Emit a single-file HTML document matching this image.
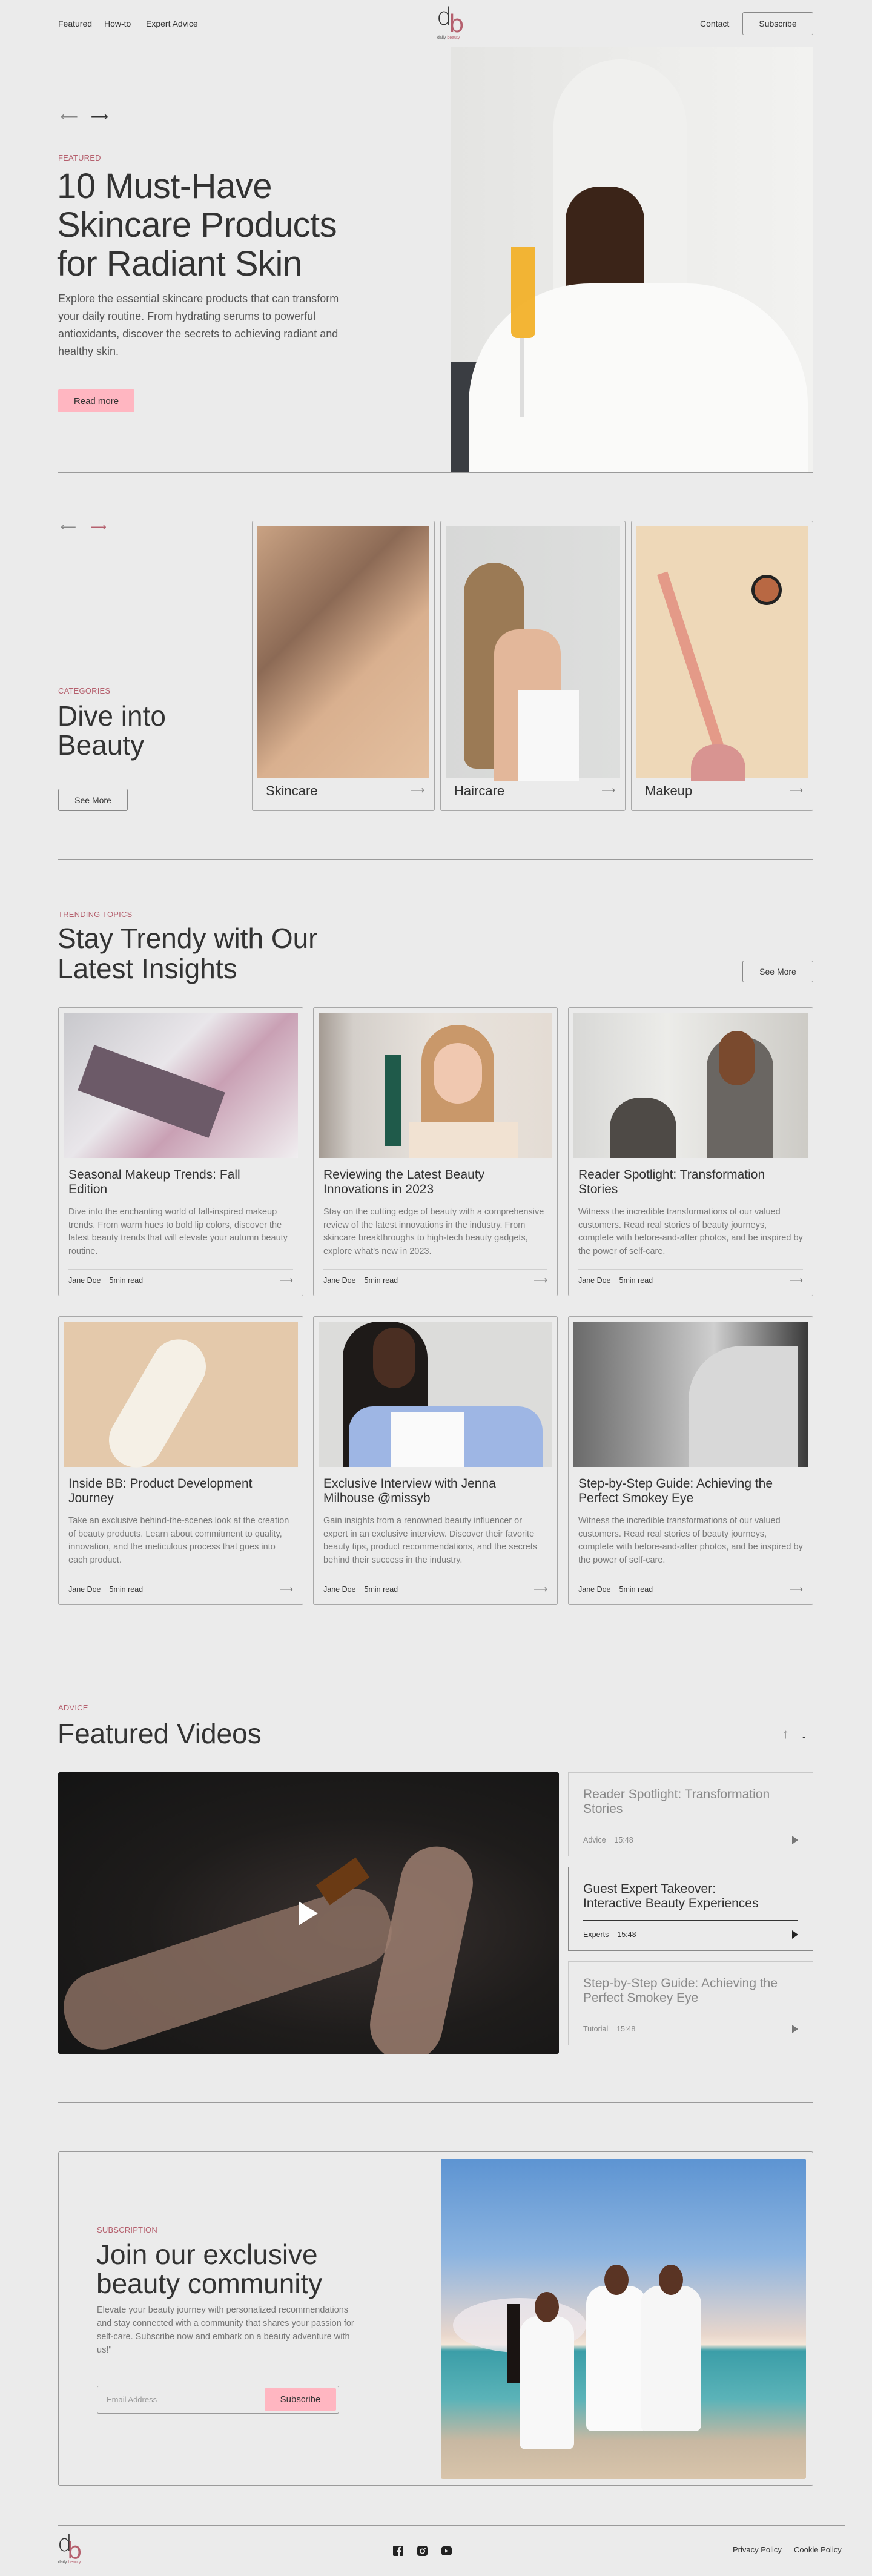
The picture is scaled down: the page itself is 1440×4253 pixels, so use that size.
<!DOCTYPE html>
<html><head><meta charset="utf-8">
<style>
*{margin:0;padding:0;box-sizing:border-box}
body{width:1440px;height:4253px;background:#ebebeb;font-family:"Liberation Sans",sans-serif;color:#333;position:relative;overflow:hidden}
.a{position:absolute}
.lbl{position:absolute;font-size:13px;color:#b5606e;letter-spacing:0.2px}
.line{position:absolute;height:1px;background:#9a9a9a}
.btn{position:absolute;border:1px solid #888;border-radius:3px;font-size:14px;display:flex;align-items:center;justify-content:center;color:#333}
.card{position:absolute;border:1px solid #a8a8a8;border-radius:3px}
.img{position:absolute;left:8px;right:8px;top:8px}
.ct{position:absolute;left:16px;width:335px;font-size:21px;line-height:24px;color:#333}
.cd{position:absolute;left:16px;right:16px;font-size:14.5px;line-height:21.5px;color:#7a7a7a}
.cdiv{position:absolute;left:16px;right:16px;height:1px;background:#cfcfcf}
.meta{position:absolute;left:16px;font-size:12.5px;color:#333}
.meta span{margin-right:14px}
.arr{position:absolute;right:16px;font-size:16px;color:#777}
.vc{position:absolute;left:938px;width:405px;height:139px;border:1px solid #c8c8c8}
.vc .t{position:absolute;left:24px;top:24px;width:340px;font-size:21px;line-height:24px;color:#8a8a8a}
.vc .d{position:absolute;left:24px;right:24px;top:87px;height:1px;background:#d5d5d5}
.vc .m{position:absolute;left:24px;top:104px;font-size:12.5px;color:#888}
.vc .p{position:absolute;right:24px;top:104px;width:0;height:0;border-left:10px solid #777;border-top:7px solid transparent;border-bottom:7px solid transparent}
</style></head><body>

<!-- header -->
<div class="a" style="left:96px;top:31px;font-size:14px">Featured</div>
<div class="a" style="left:172px;top:31px;font-size:14px">How-to</div>
<div class="a" style="left:241px;top:31px;font-size:14px">Expert Advice</div>
<div class="a" style="left:721px;top:8px;font-size:40px;font-weight:300;color:#333;line-height:40px;font-family:'DejaVu Sans',sans-serif">d</div>
<div class="a" style="left:741px;top:20px;font-size:40px;color:#b5606e;line-height:40px;font-family:'DejaVu Sans',sans-serif">b</div>
<div class="a" style="left:722px;top:59px;font-size:7px;color:#555">daily <span style="color:#b5606e">beauty</span></div>
<div class="a" style="left:1156px;top:31px;font-size:14px">Contact</div>
<div class="btn" style="left:1226px;top:20px;width:117px;height:38px">Subscribe</div>
<div class="line" style="left:96px;top:77px;width:1247px;background:#333"></div>

<!-- hero -->
<div class="a" style="left:100px;top:180px;font-size:20px;color:#888">⟵</div>
<div class="a" style="left:150px;top:180px;font-size:20px;color:#333">⟶</div>
<div class="lbl" style="left:96px;top:253px">FEATURED</div>
<div class="a" style="left:94px;top:276px;font-size:58px;line-height:64px;color:#333;letter-spacing:-0.5px">10 Must-Have<br>Skincare Products<br>for Radiant Skin</div>
<div class="a" style="left:96px;top:479px;width:490px;font-size:18px;line-height:29px;color:#555">Explore the essential skincare products that can transform your daily routine. From hydrating serums to powerful antioxidants, discover the secrets to achieving radiant and healthy skin.</div>
<div class="a" style="left:96px;top:643px;width:126px;height:38px;background:#ffb6c1;border-radius:2px;font-size:15px;display:flex;align-items:center;justify-content:center">Read more</div>
<div class="a" style="left:744px;top:78px;width:599px;height:702px;overflow:hidden;background:linear-gradient(90deg,#e4e4e2 0%,#ededeb 60%,#f2f2f0 100%)">
 <div class="a" style="left:0;top:520px;width:120px;height:200px;background:#3a3d42"></div>
 <div class="a" style="left:170px;top:20px;width:220px;height:480px;border-radius:110px 110px 60px 60px;background:#f0f0ee"></div>
 <div class="a" style="left:190px;top:230px;width:130px;height:240px;border-radius:60px 60px 70px 70px;background:#3b2418"></div>
 <div class="a" style="left:30px;top:390px;width:560px;height:340px;border-radius:200px 200px 0 0;background:#fafaf9"></div>
 <div class="a" style="left:100px;top:330px;width:40px;height:150px;background:#f2b12a;border-radius:0 0 10px 10px;opacity:.95"></div>
 <div class="a" style="left:115px;top:480px;width:6px;height:130px;background:#ddd"></div>
</div>
<div class="line" style="left:96px;top:780px;width:1247px"></div>

<!-- categories -->
<div class="a" style="left:100px;top:860px;font-size:18px;color:#888">⟵</div>
<div class="a" style="left:150px;top:860px;font-size:18px;color:#b5606e">⟶</div>
<div class="lbl" style="left:96px;top:1133px">CATEGORIES</div>
<div class="a" style="left:95px;top:1158px;font-size:46px;line-height:48px;color:#333">Dive into<br>Beauty</div>
<div class="btn" style="left:96px;top:1302px;width:115px;height:37px">See More</div>

<div class="card" style="left:416px;top:860px;width:302px;height:479px">
 <div class="img" style="height:416px;background:linear-gradient(135deg,#c9a283 0%,#8c6a55 35%,#d9b08f 60%,#e4c0a0 100%)"></div>
 <div class="a" style="left:22px;top:432px;font-size:22px">Skincare</div><div class="arr" style="top:434px">⟶</div>
</div>
<div class="card" style="left:727px;top:860px;width:306px;height:479px">
 <div class="img" style="height:416px;background:linear-gradient(90deg,#d7d8d7,#dddedd)"><div class="a" style="left:30px;top:60px;width:100px;height:340px;background:#9b7a55;border-radius:50px 50px 20px 20px"></div><div class="a" style="left:80px;top:170px;width:110px;height:250px;background:#e3b79a;border-radius:40px 40px 0 0"></div><div class="a" style="left:120px;top:270px;width:100px;height:150px;background:#f8f8f8"></div></div>
 <div class="a" style="left:22px;top:432px;font-size:22px">Haircare</div><div class="arr" style="top:434px">⟶</div>
</div>
<div class="card" style="left:1042px;top:860px;width:301px;height:479px">
 <div class="img" style="height:416px;background:#eed8b8"><div class="a" style="left:80px;top:70px;width:18px;height:300px;background:#e49a88;transform:rotate(-18deg)"></div><div class="a" style="left:190px;top:80px;width:50px;height:50px;border-radius:50%;background:#b86843;border:5px solid #222"></div><div class="a" style="left:90px;top:360px;width:90px;height:60px;border-radius:40px 40px 0 0;background:#d89491"></div></div>
 <div class="a" style="left:22px;top:432px;font-size:22px">Makeup</div><div class="arr" style="top:434px">⟶</div>
</div>
<div class="line" style="left:96px;top:1419px;width:1247px"></div>

<!-- trending -->
<div class="lbl" style="left:96px;top:1502px">TRENDING TOPICS</div>
<div class="a" style="left:95px;top:1524px;font-size:46px;line-height:50px;color:#333">Stay Trendy with Our<br>Latest Insights</div>
<div class="btn" style="left:1226px;top:1586px;width:117px;height:36px">See More</div>

<!-- row 1 -->
<div class="card" style="left:96px;top:1663px;width:405px;height:477px">
 <div class="img" style="height:240px;background:linear-gradient(135deg,#c8c8cc 0%,#e9e6ea 40%,#c9a0b4 60%,#f0eef0 100%)"><div class="a" style="left:30px;top:90px;width:230px;height:80px;background:#6c5a68;transform:rotate(20deg)"></div></div>
 <div class="ct" style="top:264px">Seasonal Makeup Trends: Fall Edition</div>
 <div class="cd" style="top:327px">Dive into the enchanting world of fall-inspired makeup trends. From warm hues to bold lip colors, discover the latest beauty trends that will elevate your autumn beauty routine.</div>
 <div class="cdiv" style="top:431px"></div>
 <div class="meta" style="top:443px"><span>Jane Doe</span>5min read</div><div class="arr" style="top:440px">⟶</div>
</div>
<div class="card" style="left:517px;top:1663px;width:404px;height:477px">
 <div class="img" style="height:240px;background:linear-gradient(90deg,#a39a92 0%,#d4cfca 15%,#e8e3dd 50%,#e4dcd4 100%)"><div class="a" style="left:170px;top:20px;width:120px;height:220px;background:#c9986a;border-radius:60px 60px 0 0"></div><div class="a" style="left:190px;top:50px;width:80px;height:100px;background:#f0c8b0;border-radius:40px"></div><div class="a" style="left:150px;top:180px;width:180px;height:60px;background:#f1e2d2"></div><div class="a" style="left:110px;top:70px;width:26px;height:150px;background:#1f5a4a"></div></div>
 <div class="ct" style="top:264px">Reviewing the Latest Beauty Innovations in 2023</div>
 <div class="cd" style="top:327px">Stay on the cutting edge of beauty with a comprehensive review of the latest innovations in the industry. From skincare breakthroughs to high-tech beauty gadgets, explore what's new in 2023.</div>
 <div class="cdiv" style="top:431px"></div>
 <div class="meta" style="top:443px"><span>Jane Doe</span>5min read</div><div class="arr" style="top:440px">⟶</div>
</div>
<div class="card" style="left:938px;top:1663px;width:405px;height:477px">
 <div class="img" style="height:240px;background:linear-gradient(90deg,#d8d8d6,#ecece9 40%,#cdcbc6)"><div class="a" style="left:60px;top:140px;width:110px;height:100px;background:#4e4a46;border-radius:50px 50px 0 0"></div><div class="a" style="left:220px;top:40px;width:110px;height:200px;background:#6a6662;border-radius:50px 50px 0 0"></div><div class="a" style="left:240px;top:30px;width:60px;height:90px;background:#7a4a2e;border-radius:30px"></div></div>
 <div class="ct" style="top:264px">Reader Spotlight: Transformation Stories</div>
 <div class="cd" style="top:327px">Witness the incredible transformations of our valued customers. Read real stories of beauty journeys, complete with before-and-after photos, and be inspired by the power of self-care.</div>
 <div class="cdiv" style="top:431px"></div>
 <div class="meta" style="top:443px"><span>Jane Doe</span>5min read</div><div class="arr" style="top:440px">⟶</div>
</div>

<!-- row 2 -->
<div class="card" style="left:96px;top:2173px;width:405px;height:477px">
 <div class="img" style="height:240px;background:#e4c9ab"><div class="a" style="left:110px;top:20px;width:90px;height:230px;background:#f5f0e6;border-radius:45px;transform:rotate(30deg)"></div></div>
 <div class="ct" style="top:264px">Inside BB: Product Development Journey</div>
 <div class="cd" style="top:327px">Take an exclusive behind-the-scenes look at the creation of beauty products. Learn about commitment to quality, innovation, and the meticulous process that goes into each product.</div>
 <div class="cdiv" style="top:431px"></div>
 <div class="meta" style="top:443px"><span>Jane Doe</span>5min read</div><div class="arr" style="top:440px">⟶</div>
</div>
<div class="card" style="left:517px;top:2173px;width:404px;height:477px">
 <div class="img" style="height:240px;background:#dcdcda"><div class="a" style="left:40px;top:0;width:140px;height:240px;background:#1e1a18;border-radius:60px 60px 0 0"></div><div class="a" style="left:90px;top:10px;width:70px;height:100px;background:#4a2e22;border-radius:35px"></div><div class="a" style="left:50px;top:140px;width:320px;height:100px;background:#9eb6e4;border-radius:40px 40px 0 0"></div><div class="a" style="left:120px;top:150px;width:120px;height:90px;background:#fafafa"></div></div>
 <div class="ct" style="top:264px">Exclusive Interview with Jenna Milhouse @missyb</div>
 <div class="cd" style="top:327px">Gain insights from a renowned beauty influencer or expert in an exclusive interview. Discover their favorite beauty tips, product recommendations, and the secrets behind their success in the industry.</div>
 <div class="cdiv" style="top:431px"></div>
 <div class="meta" style="top:443px"><span>Jane Doe</span>5min read</div><div class="arr" style="top:440px">⟶</div>
</div>
<div class="card" style="left:938px;top:2173px;width:405px;height:477px">
 <div class="img" style="height:240px;background:linear-gradient(90deg,#6a6a6a 0%,#9a9a9a 30%,#cfcfcf 60%,#3a3a3a 100%)"><div class="a" style="left:190px;top:40px;width:180px;height:200px;background:#d8d8d8;border-radius:90px 0 0 0"></div></div>
 <div class="ct" style="top:264px;width:370px">Step-by-Step Guide: Achieving the Perfect Smokey Eye</div>
 <div class="cd" style="top:327px">Witness the incredible transformations of our valued customers. Read real stories of beauty journeys, complete with before-and-after photos, and be inspired by the power of self-care.</div>
 <div class="cdiv" style="top:431px"></div>
 <div class="meta" style="top:443px"><span>Jane Doe</span>5min read</div><div class="arr" style="top:440px">⟶</div>
</div>
<div class="line" style="left:96px;top:2732px;width:1247px"></div>

<!-- videos -->
<div class="lbl" style="left:96px;top:2812px">ADVICE</div>
<div class="a" style="left:95px;top:2836px;font-size:46px;line-height:52px;color:#333">Featured Videos</div>
<div class="a" style="left:1292px;top:2850px;font-size:22px;color:#999">↑</div>
<div class="a" style="left:1322px;top:2850px;font-size:22px;color:#333">↓</div>
<div class="a" style="left:96px;top:2926px;width:827px;height:465px;border-radius:3px;overflow:hidden;background:radial-gradient(ellipse at 60% 55%,#3a3230 0%,#1e1c1b 50%,#141414 100%)">
 <div class="a" style="left:0;top:260px;width:560px;height:130px;background:#8a6e62;border-radius:60px;transform:rotate(-18deg);opacity:.85"></div>
 <div class="a" style="left:540px;top:120px;width:120px;height:360px;background:#9c7e70;border-radius:60px;transform:rotate(12deg);opacity:.85"></div>
 <div class="a" style="left:430px;top:160px;width:80px;height:40px;background:#6a3a14;transform:rotate(-35deg)"></div>
 <div class="a" style="left:397px;top:213px;width:0;height:0;border-left:32px solid #fff;border-top:20px solid transparent;border-bottom:20px solid transparent"></div>
</div>
<div class="vc" style="top:2926px"><div class="t">Reader Spotlight: Transformation Stories</div><div class="d"></div><div class="m">Advice&nbsp;&nbsp;&nbsp;&nbsp;15:48</div><div class="p"></div></div>
<div class="vc" style="top:3082px;border-color:#888"><div class="t" style="color:#333;width:320px">Guest Expert Takeover: Interactive Beauty Experiences</div><div class="d" style="background:#333"></div><div class="m" style="color:#333">Experts&nbsp;&nbsp;&nbsp;&nbsp;15:48</div><div class="p" style="border-left-color:#222"></div></div>
<div class="vc" style="top:3238px"><div class="t" style="width:330px">Step-by-Step Guide: Achieving the Perfect Smokey Eye</div><div class="d"></div><div class="m">Tutorial&nbsp;&nbsp;&nbsp;&nbsp;15:48</div><div class="p"></div></div>
<div class="line" style="left:96px;top:3471px;width:1247px"></div>

<!-- subscription -->
<div class="a" style="left:96px;top:3552px;width:1247px;height:552px;border:1px solid #9a9a9a;border-radius:3px"></div>
<div class="lbl" style="left:160px;top:3674px">SUBSCRIPTION</div>
<div class="a" style="left:159px;top:3698px;font-size:46px;line-height:48px;color:#333">Join our exclusive<br>beauty community</div>
<div class="a" style="left:160px;top:3803px;width:440px;font-size:14.5px;line-height:22px;color:#777">Elevate your beauty journey with personalized recommendations and stay connected with a community that shares your passion for self-care. Subscribe now and embark on a beauty adventure with us!"</div>
<div class="a" style="left:160px;top:3939px;width:400px;height:46px;border:1px solid #999;border-radius:3px"></div>
<div class="a" style="left:176px;top:3954px;font-size:13px;color:#999">Email Address</div>
<div class="a" style="left:437px;top:3943px;width:118px;height:37px;background:#ffb6c1;border-radius:2px;font-size:15px;display:flex;align-items:center;justify-content:center">Subscribe</div>
<div class="a" style="left:728px;top:3564px;width:603px;height:529px;border-radius:3px;overflow:hidden;background:linear-gradient(180deg,#5d94d2 0%,#8cb4e0 30%,#e8d6cc 55%,#f4e6d8 58%,#3b9ea8 60%,#5bb3b8 75%,#c8b8a2 88%,#d8c4aa 100%)">
 <div class="a" style="left:20px;top:230px;width:220px;height:90px;background:#efe8ec;border-radius:50%;opacity:.8"></div>
 <div class="a" style="left:110px;top:240px;width:20px;height:130px;background:#1a1412"></div>
 <div class="a" style="left:130px;top:260px;width:90px;height:220px;background:#f8f8f8;border-radius:30px 30px 10px 10px"></div>
 <div class="a" style="left:240px;top:210px;width:100px;height:240px;background:#fafafa;border-radius:30px 30px 10px 10px"></div>
 <div class="a" style="left:330px;top:210px;width:100px;height:240px;background:#f6f6f6;border-radius:30px 30px 10px 10px"></div>
 <div class="a" style="left:155px;top:220px;width:40px;height:50px;background:#5a3424;border-radius:50%"></div>
 <div class="a" style="left:270px;top:175px;width:40px;height:50px;background:#5a3424;border-radius:50%"></div>
 <div class="a" style="left:360px;top:175px;width:40px;height:50px;background:#5a3424;border-radius:50%"></div>
</div>

<!-- footer -->
<div class="line" style="left:96px;top:4169px;width:1300px"></div>
<div class="a" style="left:95px;top:4180px;font-size:38px;font-weight:300;line-height:38px;font-family:'DejaVu Sans',sans-serif">d</div>
<div class="a" style="left:111px;top:4192px;font-size:38px;color:#b5606e;line-height:38px;font-family:'DejaVu Sans',sans-serif">b</div>
<div class="a" style="left:96px;top:4227px;font-size:7px;color:#555">daily <span style="color:#b5606e">beauty</span></div>
<svg class="a" style="left:649px;top:4202px" width="100" height="20" viewBox="0 0 100 20">
 <rect x="0" y="1" width="17" height="17" rx="2" fill="#222"/><path d="M11 18V11h2.5l.4-2.8H11V6.6c0-.8.3-1.3 1.4-1.3h1.5V2.8c-.3 0-1.1-.1-2.1-.1-2.1 0-3.5 1.3-3.5 3.6v2H6.2V11h2.1v7z" fill="#ebebeb"/>
 <rect x="40" y="1" width="17" height="17" rx="4" fill="#222"/><circle cx="48.5" cy="10" r="3.6" fill="none" stroke="#ebebeb" stroke-width="1.8"/><circle cx="53" cy="5.2" r="1" fill="#ebebeb"/>
 <rect x="80" y="2" width="17" height="15" rx="4" fill="#222"/><path d="M86 6.5v6l5-3z" fill="#ebebeb"/>
</svg>
<div class="a" style="left:1210px;top:4202px;font-size:13px">Privacy Policy</div>
<div class="a" style="left:1311px;top:4202px;font-size:13px">Cookie Policy</div>
</body></html>
